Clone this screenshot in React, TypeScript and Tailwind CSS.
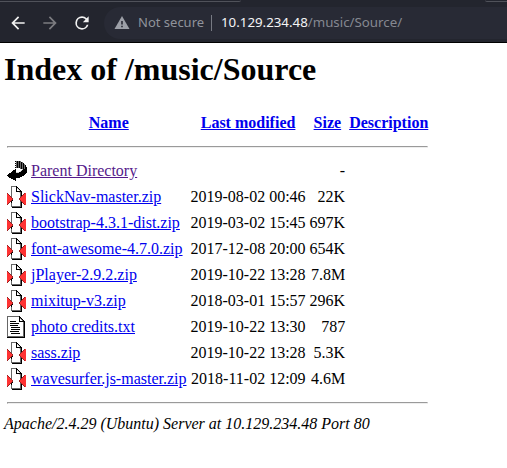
import type { ReactNode } from 'react';

type Kind = 'back' | 'zip' | 'text';

const entries: { kind: Kind; name: string; date: string; size: string }[] = [
  { kind: 'back', name: 'Parent Directory', date: '', size: '-' },
  { kind: 'zip', name: 'SlickNav-master.zip', date: '2019-08-02 00:46', size: '22K' },
  { kind: 'zip', name: 'bootstrap-4.3.1-dist.zip', date: '2019-03-02 15:45', size: '697K' },
  { kind: 'zip', name: 'font-awesome-4.7.0.zip', date: '2017-12-08 20:00', size: '654K' },
  { kind: 'zip', name: 'jPlayer-2.9.2.zip', date: '2019-10-22 13:28', size: '7.8M' },
  { kind: 'zip', name: 'mixitup-v3.zip', date: '2018-03-01 15:57', size: '296K' },
  { kind: 'text', name: 'photo credits.txt', date: '2019-10-22 13:30', size: '787' },
  { kind: 'zip', name: 'sass.zip', date: '2019-10-22 13:28', size: '5.3K' },
  { kind: 'zip', name: 'wavesurfer.js-master.zip', date: '2018-11-02 12:09', size: '4.6M' },
];

// 20x22 bitmaps: K black, G grey, L light grey, W white, R red, D dark red
const bitmaps: Record<Kind, string[]> = {
  back: [
    '....................',
    '........KGKGKG......',
    '.........GKGKGKG....',
    '........KGKGKGKGK...',
    '.........GKGKGKGKG..',
    '........KGKGKGKGKGK.',
    '.........GKGKGKGKGK.',
    '........KGKGKGKGKGKK',
    '.............GKGKGKK',
    '........K......LKKKK',
    '......KKK.....LKKKKK',
    '.....KKKK....LKKKKKK',
    '....KKKKKLLLKKKKKKKK',
    '..KKKKKKKKKKKKKKKKK.',
    '.KKKKKKKKKKKKKKKKK..',
    'KKKKKKKKKKKKKKKKK...',
    '.KKKKKKKKKKKKKK.....',
    '..KKKKKKKKKKK.......',
    '....KKKKK...........',
    '......KKK...........',
    '........K...........',
    '....................',
  ],
  zip: [
    '....GGGGGK..........',
    '....GWWWWKK.........',
    '....GWWWWKLK........',
    '....GWWWWKWLK.......',
    '....GWWWWKWWLK......',
    '....GWWWWKKKKKK.....',
    '....GWWWWWWWLGK.....',
    'D...GWWWWWWWWGK..DR.',
    'RD..GWWWWWWWWGK.DRR.',
    'RRD.GWWWWWWWWGKDRRR.',
    'RRRDGWWWWWWWWGDRRRR.',
    'RRRRDWWWWWWWWDRRRRR.',
    'RRRRRDWWWWWWDRRRRRR.',
    'RRRRRDWWWWWWDRRRRRR.',
    'RRRRDKWWWWWWWDRRRRR.',
    'RRRDKWWWWWWWWGDRRRR.',
    'RRD.KWWWWWWWWGKDRRR.',
    'RD..GWWWWWWWWGK.DRR.',
    'D...GWWWWWWWWGK..DR.',
    '....GWWWWWWWWGK.....',
    '....GGGGGGGGGGK.....',
    '.....KKKKKKKKKK.....',
  ],
  text: [
    'GGGGGGGGGGGGK.......',
    'GWWWWWWWWWWWKK......',
    'GWWWWWWWWWWWKGK.....',
    'GWWWWWWWWWWWKWGK....',
    'GWWWWWWWWWWWKWWGK...',
    'GWWKKKKKKWWWKKKKKK..',
    'GWWWWWWWWWWWWWWWGK..',
    'GWWKKKKKKKKKWWWWGK..',
    'GWWWWWWWWWWWWWWWGK..',
    'GWWKKKKKKKKWWWWWGK..',
    'GWWWWWWWWWWWWWWWGK..',
    'GWWWKKKKKKKKKWWWGK..',
    'GWWWWWWWWWWWWWWWGK..',
    'GWWWKKKKKKKKKWWWGK..',
    'GWWWWWWWWWWWWWWWGK..',
    'GWWKKKKKKKKKWWWWGK..',
    'GWWWWWWWWWWWWWWWGK..',
    'GWWWKKKKKKKKKWWWGK..',
    'GWWWWWWWWWWWWWWWGK..',
    'GWWWWWWWWWWWWWWWGK..',
    'GGGGGGGGGGGGGGGGGK..',
    'KKKKKKKKKKKKKKKKKK..',
  ],
};

const inks: Record<string, string> = { K: '#000', G: '#666', L: '#ccc', W: '#fff', R: '#ff3333', D: '#992222' };

function FileIcon({ kind }: { kind: Kind }) {
  return (
    <svg width="20" height="22" viewBox="0 0 20 22" shapeRendering="crispEdges" className="block">
      {bitmaps[kind].flatMap((row, y) =>
        [...row].map((c, x) =>
          c === '.' ? null : <rect key={`${x}-${y}`} x={x} y={y} width="1" height="1" fill={inks[c]} />,
        ),
      )}
    </svg>
  );
}

function Material({ d, className }: { d: string; className: string }) {
  return (
    <svg width="20" height="20" viewBox="0 0 24 24" fill="currentColor" className={`shrink-0 ${className}`}>
      <path d={d} />
    </svg>
  );
}

function Rule() {
  return (
    <tr>
      <th colSpan={5} className="p-px">
        <hr className="my-2 h-0.5 border border-t-[#9a9a9a] border-l-[#9a9a9a] border-r-[#eee] border-b-[#eee]" />
      </th>
    </tr>
  );
}

function Heading({ children }: { children: ReactNode }) {
  return (
    <th className="p-px text-center font-bold">
      <a href="#" className="text-[#0000ee] underline">{children}</a>
    </th>
  );
}

export default function App() {
  return (
    <div className="h-[468px] w-[507px] overflow-hidden bg-white">
      <header className="flex h-[43px] flex-col border-b border-black bg-[#23252e] font-['Noto_Sans',sans-serif]">
        <div className="flex h-[2px] shrink-0 justify-between">
          <div className="w-[241px] rounded-br border-b border-[#50525a]" />
          <div className="w-[22px] rounded-bl border-b border-[#50525a]" />
        </div>
        <div className="flex h-10 items-center pt-0.5">
          <Material className="ml-2 text-[#f1f1f1]" d="M20 11H7.83l5.59-5.59L12 4l-8 8 8 8 1.41-1.41L7.83 13H20v-2z" />
          <Material className="ml-3 text-[#7c7c80]" d="m12 4-1.41 1.41L16.17 11H4v2h12.17l-5.58 5.59L12 20l8-8z" />
          <Material className="ml-3 text-[#f1f1f1]" d="M17.65 6.35A7.96 7.96 0 0 0 12 4a8 8 0 1 0 7.73 10h-2.08A6 6 0 1 1 12 6c1.66 0 3.14.69 4.22 1.78L13 11h7V4l-2.35 2.35z" />
          <div className="ml-3 flex h-8 flex-1 items-center rounded-l-full bg-[#282a35] whitespace-nowrap">
            <svg width="16" height="14" viewBox="0 0 16 14" className="ml-[10px] shrink-0 text-[#9c9fa7]">
              <path fill="currentColor" d="M8 0l7.5 13H.5z" />
              <path stroke="#282a35" strokeWidth="1.6" d="M8 5v3.5M8 9.7v1.6" />
            </svg>
            <span className="ml-2 w-[67px] text-[13px] text-[#90939b]">Not secure</span>
            <span className="ml-[6px] h-4 w-px bg-[#777a83]" />
            <span className="ml-[9px] text-[13.3px] text-[#f4f4f5]">10.129.234.48<span className="text-[#858891]">/music/Source/</span></span>
          </div>
        </div>
      </header>

      <main className="pt-2 pl-1 font-['Liberation_Serif',serif] text-[16px] leading-[18px] text-black">
        <h1 className="mb-[21px] text-[32px] leading-[37px] font-bold">Index of /music/Source</h1>
        <table className="border-separate border-spacing-[2px] whitespace-nowrap">
          <tbody>
            <tr>
              <th className="p-px"><div className="h-[22px] w-5" /></th>
              <Heading>Name</Heading>
              <Heading>Last modified</Heading>
              <Heading>Size</Heading>
              <Heading>Description</Heading>
            </tr>
            <Rule />
            {entries.map(({ kind, name, date, size }) => (
              <tr key={name}>
                <td className="p-px align-top"><FileIcon kind={kind} /></td>
                <td className="p-px">
                  <a href="#" className={kind === 'back' ? 'text-[#551a8b] underline' : 'text-[#0000ee] underline'}>{name}</a>
                </td>
                <td className="p-px text-right">{date}</td>
                <td className="p-px text-right">{size}</td>
                <td className="p-px">{'\u00a0'}</td>
              </tr>
            ))}
            <Rule />
          </tbody>
        </table>
        <address className="italic">Apache/2.4.29 (Ubuntu) Server at 10.129.234.48 Port 80</address>
      </main>
    </div>
  );
}
